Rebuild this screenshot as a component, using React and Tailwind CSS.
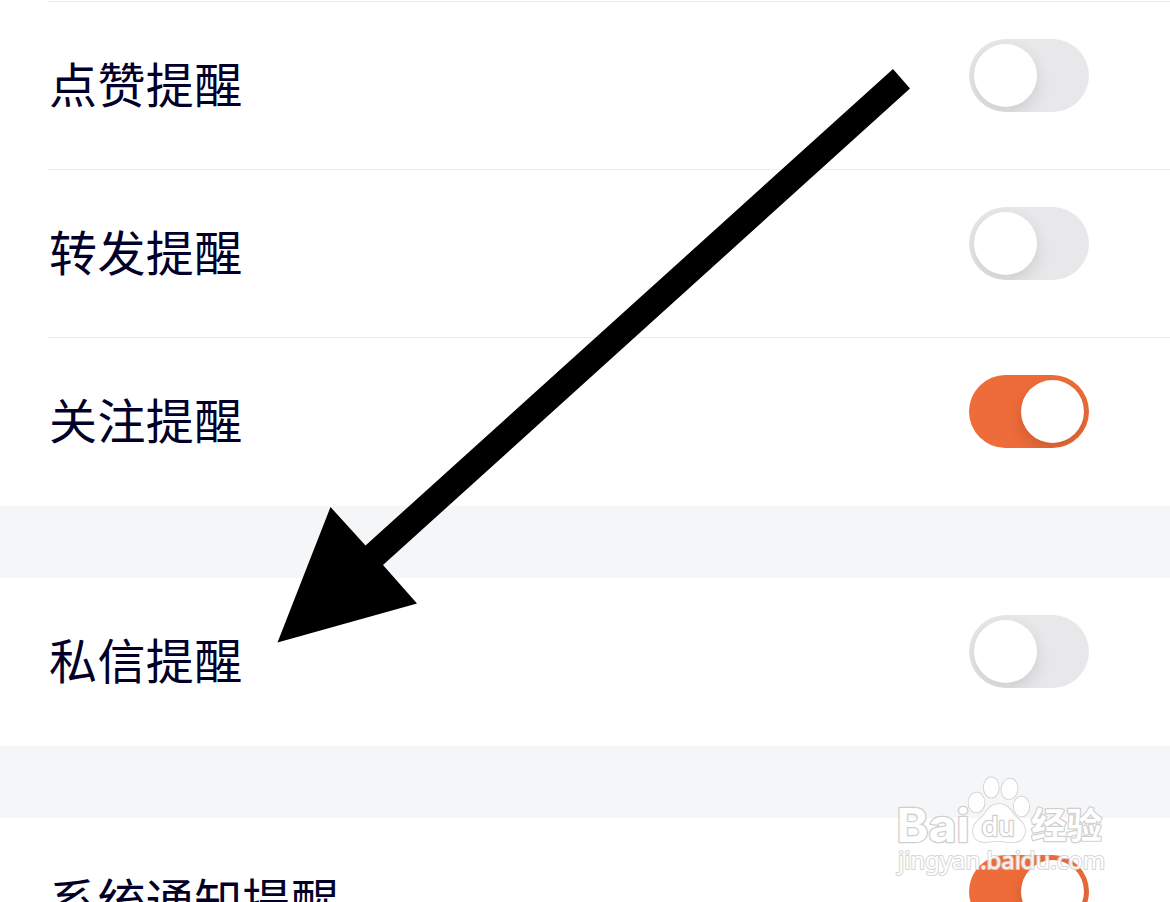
import React from "react";
import clsx from "clsx";

const GROUPS = [
  [
    { id: "like", label: "点赞提醒", on: false },
    { id: "repost", label: "转发提醒", on: false },
    { id: "follow", label: "关注提醒", on: true },
  ],
  [{ id: "message", label: "私信提醒", on: false }],
  [{ id: "system", label: "系统通知提醒", on: true }],
];

function Toggle({ on }) {
  return (
    <button
      role="switch"
      aria-checked={on}
      className={clsx(
        "mt-[37px] flex h-[73px] w-[120px] shrink-0 items-center overflow-hidden rounded-full",
        on ? "justify-end bg-[#ee6c39] pr-[5px]" : "justify-start bg-[#e8e8ea] pl-[5px]"
      )}
    >
      <span
        className={clsx(
          "size-[63px] rounded-full bg-white",
          on ? "shadow-[0_6px_16px_rgba(0,0,0,0.15)]" : "shadow-[0_6px_16px_rgba(0,0,0,0.12)]"
        )}
      />
    </button>
  );
}

function SettingRow({ label, on, last }) {
  return (
    <div
      className={clsx(
        "ml-12 flex h-[168px] items-start justify-between border-b pr-[81px]",
        last ? "border-transparent" : "border-[#ececec]"
      )}
    >
      <span className="mt-[44px] ml-px text-[48px] leading-[72px] tracking-[0.4px] text-[#020028]">{label}</span>
      <Toggle on={on} />
    </div>
  );
}

function Arrow() {
  return (
    <svg className="absolute top-0 left-0" width="1170" height="902" viewBox="0 0 1170 902">
      <path d="M893 69 910 88.500 383 565 417 603.500 277.500 642.500 330.500 507 365.500 545.500Z" />
    </svg>
  );
}

function Watermark() {
  return (
    <svg
      className="absolute top-[760px] left-[880px] opacity-90"
      width="240"
      height="142"
      viewBox="0 0 240 142"
      fill="#fff"
      stroke="#cbcbcb"
      strokeWidth="1.6"
      strokeLinejoin="round"
      paintOrder="stroke"
    >
      <text
        x="16.500"
        y="81.500"
        fontSize="46"
        fontWeight="700"
        fontFamily="Inter, sans-serif"
        textLength="73"
        lengthAdjust="spacingAndGlyphs"
        strokeWidth="2.600"
      >
        Bai
      </text>
      <ellipse cx="96.500" cy="42.500" rx="8" ry="10" />
      <ellipse cx="111.300" cy="27.500" rx="7.500" ry="10.300" />
      <ellipse cx="129.500" cy="29" rx="8" ry="10.300" transform="rotate(8 129.500 29)" />
      <ellipse cx="141.500" cy="46.500" rx="7.800" ry="10" />
      <path d="M119 44C110 44 107 51 103 56C98 61 93 64 93 71C93 78 98 82 104 82C110 82 113 81 119 81C125 81 128 83 134 82C141 82 145 77 145 70C145 63 139 60 135 56C131 51 128 44 119 44Z" />
      <text
        x="101.500"
        y="76"
        fontSize="27"
        fontWeight="500"
        fontFamily="Inter, sans-serif"
        textLength="33"
        lengthAdjust="spacingAndGlyphs"
        strokeWidth="2.600"
      >
        du
      </text>
      <text
        x="151"
        y="78.500"
        fontSize="36"
        fontWeight="700"
        fontFamily='"Noto Sans CJK SC", sans-serif'
        textLength="71"
        lengthAdjust="spacingAndGlyphs"
        strokeWidth="2.400"
      >
        经验
      </text>
      <text
        x="18"
        y="109"
        fontSize="23"
        fontFamily='"Noto Sans", sans-serif'
        textLength="207"
        lengthAdjust="spacingAndGlyphs"
        stroke="#d2d2d2"
        strokeWidth="2"
      >
        jingyan.baidu.com
      </text>
    </svg>
  );
}

export default function App() {
  return (
    <div className="relative h-[902px] w-[1170px] overflow-hidden bg-white font-['Noto_Sans_CJK_SC',sans-serif]">
      <div className="ml-12 h-[2px] border-b border-[#ececec]" />
      <div className="flex flex-col">
        {GROUPS.map((rows, idx) => (
          <section key={rows[0].id}>
            {idx > 0 && <div className="h-[72px] bg-[#f5f6f8]" />}
            {rows.map((row, i) => (
              <SettingRow key={row.id} label={row.label} on={row.on} last={i === rows.length - 1} />
            ))}
          </section>
        ))}
      </div>
      <Arrow />
      <Watermark />
    </div>
  );
}
